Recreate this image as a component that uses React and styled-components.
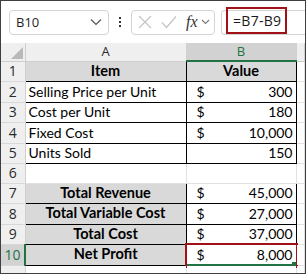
import styled, { createGlobalStyle } from "styled-components";

const GlobalStyle = createGlobalStyle`
  body {
    margin: 0;
    background: #fff;
  }
`;

const rows = [
  { n: 1, h: 20, a: "Item", b: "Value", head: true },
  { n: 2, h: 21, a: "Selling Price per Unit", cur: true, v: "300" },
  { n: 3, h: 20, a: "Cost per Unit", cur: true, v: "180" },
  { n: 4, h: 21, a: "Fixed Cost", cur: true, v: "10,000" },
  { n: 5, h: 20, a: "Units Sold", v: "150" },
  { n: 6, h: 20, empty: true },
  { n: 7, h: 20, a: "Total Revenue", total: true, cur: true, v: "45,000" },
  { n: 8, h: 21, a: "Total Variable Cost", total: true, cur: true, v: "27,000" },
  { n: 9, h: 20, a: "Total Cost", total: true, cur: true, v: "37,000" },
  { n: 10, h: 21, a: "Net Profit", total: true, cur: true, v: "8,000", active: true },
];

const App = () => {
  return (
    <>
      <GlobalStyle />
      <Frame>
        <TopBar>
          <NameBox>
            <span>B10</span>
            <Chevron width="12" height="8" viewBox="0 0 12 8">
              <polyline points="1,1.5 6,6.5 11,1.5" />
            </Chevron>
          </NameBox>
          <Dots>
            <i />
            <i />
            <i />
          </Dots>
          <FxGroup>
            <svg width="14" height="14" viewBox="0 0 14 14">
              <path d="M1 1 L13 13 M13 1 L1 13" stroke="#c4c4c4" strokeWidth="1.2" fill="none" />
            </svg>
            <svg width="16" height="14" viewBox="0 0 16 14">
              <polyline points="1,7.5 5.5,12.5 15,1.5" stroke="#c4c4c4" strokeWidth="1.2" fill="none" />
            </svg>
            <Fx>fx</Fx>
            <SmallChevron width="9" height="6" viewBox="0 0 9 6">
              <polyline points="1,1 4.5,4.5 8,1" />
            </SmallChevron>
          </FxGroup>
          <FormulaBox>
            <FormulaText>=B7-B9</FormulaText>
          </FormulaBox>
        </TopBar>

        <Sheet>
          <colgroup>
            <col style={{ width: 24 }} />
            <col style={{ width: 161 }} />
            <col style={{ width: 110 }} />
            <col />
          </colgroup>
          <tbody>
            <Row $h={18}>
              <Corner>
                <Triangle />
              </Corner>
              <ColHead>A</ColHead>
              <ColHead $active>B</ColHead>
              <ColHead />
            </Row>
            {rows.map((r) => (
              <Row key={r.n} $h={r.h}>
                <RowHead $active={r.active}>{r.n}</RowHead>
                {r.empty ? (
                  <>
                    <Cell />
                    <Cell $leftDark />
                  </>
                ) : (
                  <>
                    <Cell
                      $box
                      $fill={r.head || r.total}
                      $bold={r.head || r.total}
                      $center={r.head || r.total}
                    >
                      {r.a}
                    </Cell>
                    <Cell $box $fill={r.head} $bold={r.head} $center={r.head}>
                      {r.head ? (
                        r.b
                      ) : (
                        <Money>
                          <span>{r.cur ? "$" : ""}</span>
                          <span>{r.v}</span>
                        </Money>
                      )}
                      {r.active && (
                        <Highlight>
                          <Handle />
                        </Highlight>
                      )}
                    </Cell>
                  </>
                )}
                <Cell />
              </Row>
            ))}
            <Row $h={10}>
              <RowHead />
              <Cell />
              <Cell />
              <Cell />
            </Row>
          </tbody>
        </Sheet>
      </Frame>
    </>
  );
};

const Frame = styled.div`
  width: 306px;
  height: 274px;
  box-sizing: border-box;
  border: 1px solid #3f3f3f;
  overflow: hidden;
  background: #fff;
  display: flex;
  flex-direction: column;
`;

const TopBar = styled.div`
  flex: none;
  height: 42px;
  display: flex;
  align-items: center;
  padding-left: 8px;
  font-family: "Open Sans", "Noto Sans", sans-serif;
  background: #fff;
`;

const NameBox = styled.div`
  width: 100px;
  height: 25px;
  box-sizing: border-box;
  border: 1px solid #d4d4d4;
  border-radius: 4px;
  display: flex;
  align-items: center;
  justify-content: space-between;
  padding: 0 6px 0 6px;
  font-size: 13px;
  color: #1f1f1f;
`;

const Chevron = styled.svg`
  fill: none;
  stroke: #555;
  stroke-width: 1.2;
`;

const Dots = styled.div`
  width: 22px;
  display: flex;
  flex-direction: column;
  align-items: center;
  gap: 2px;

  i {
    display: block;
    width: 2px;
    height: 2px;
    background: #333;
  }
`;

const FxGroup = styled.div`
  width: 84px;
  height: 25px;
  box-sizing: border-box;
  border: 1px solid #d4d4d4;
  border-radius: 4px;
  display: flex;
  align-items: center;
  gap: 9px;
  padding-left: 6px;
`;

const Fx = styled.span`
  font-family: "Liberation Serif", serif;
  font-style: italic;
  font-size: 16px;
  color: #333;
  margin-right: -6px;
`;

const SmallChevron = styled.svg`
  fill: none;
  stroke: #777;
  stroke-width: 1.1;
`;

const FormulaBox = styled.div`
  flex: 1;
  margin-left: 6px;
  height: 25px;
  box-sizing: border-box;
  border: 1px solid #d4d4d4;
  border-right: none;
  border-radius: 4px 0 0 4px;
  display: flex;
  align-items: center;
  padding-left: 4px;
`;

const FormulaText = styled.span`
  height: 27px;
  width: 61px;
  box-sizing: border-box;
  border: 2px solid #a01218;
  display: flex;
  align-items: center;
  padding-left: 5px;
  margin-top: -3px;
  font-size: 14px;
  color: #1a1a1a;
  letter-spacing: 0.3px;
`;

const Sheet = styled.table`
  border-collapse: collapse;
  table-layout: fixed;
  width: 304px;
  font-family: Lato, "Liberation Sans", sans-serif;
  font-size: 14px;
  color: #000;
`;

const Row = styled.tr`
  height: ${(p) => p.$h}px;
`;

const Corner = styled.th`
  position: relative;
  background: #efefef;
  border-right: 1px solid #cfcfcf;
  border-bottom: 1px solid #cfcfcf;
  padding: 0;
`;

const Triangle = styled.div`
  position: absolute;
  right: 2px;
  bottom: 2px;
  width: 0;
  height: 0;
  border-left: 12px solid transparent;
  border-bottom: 12px solid #b9b9b9;
`;

const ColHead = styled.th`
  background: ${(p) => (p.$active ? "#d2d2d2" : "#efefef")};
  color: ${(p) => (p.$active ? "#217346" : "#2a2a2a")};
  border-right: 1px solid #d0d0d0;
  border-bottom: ${(p) => (p.$active ? "2px solid #217346" : "1px solid #cfcfcf")};
  font-family: "Open Sans", "Noto Sans", sans-serif;
  font-weight: 400;
  font-size: 13px;
  padding: 0;
  line-height: 1;
`;

const RowHead = styled.th`
  background: ${(p) => (p.$active ? "#d2d2d2" : "#efefef")};
  color: ${(p) => (p.$active ? "#217346" : "#2a2a2a")};
  border-right: ${(p) => (p.$active ? "2px solid #217346" : "1px solid #cfcfcf")};
  border-bottom: 1px solid #d8d8d8;
  font-family: "Open Sans", "Noto Sans", sans-serif;
  font-weight: 400;
  font-size: 14px;
  padding: 0;
  line-height: 1;
`;

const Cell = styled.td`
  position: relative;
  padding: 0 3px;
  line-height: 1;
  white-space: nowrap;
  overflow: visible;
  border: 1px solid ${(p) => (p.$box ? "#000" : "#e1e1e1")};
  border-left-color: ${(p) => (p.$box || p.$leftDark ? "#000" : "#e1e1e1")};
  background: ${(p) => (p.$fill ? "#d9d9d9" : "#fff")};
  font-weight: ${(p) => (p.$bold ? 700 : 400)};
  font-size: ${(p) => (p.$bold ? "14.5px" : "14px")};
  text-align: ${(p) => (p.$center ? "center" : "left")};
`;

const Money = styled.div`
  display: flex;
  justify-content: space-between;
  padding-left: 7px;
`;

const Highlight = styled.div`
  position: absolute;
  left: -2px;
  right: -2px;
  top: -2px;
  bottom: -3px;
  border: 2px solid #a01218;
  box-shadow: inset 0 -2px 0 #217346;
`;

const Handle = styled.div`
  position: absolute;
  right: 0;
  bottom: 0;
  width: 4px;
  height: 4px;
  background: #217346;
`;

export default App;
